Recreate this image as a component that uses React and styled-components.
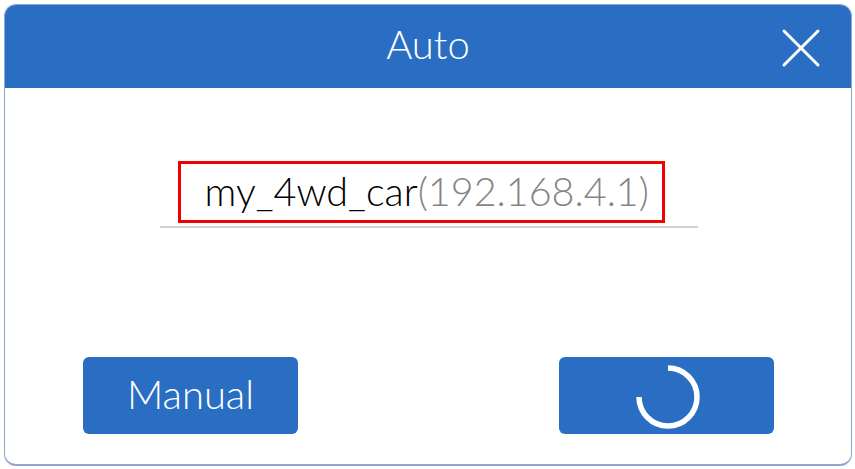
import React from "react";
import styled, { createGlobalStyle } from "styled-components";

const Global = createGlobalStyle`
  html, body { margin: 0; padding: 0; background: #ffffff; }
  body { font-family: Lato, "Noto Sans", sans-serif; }
`;

const Page = styled.div`
  padding: 4px 3px 3px 4px;
  box-sizing: border-box;
  width: 855px;
  height: 469px;
`;

const Dialog = styled.div`
  width: 848px;
  height: 462px;
  box-sizing: border-box;
  border: 1px solid #8ea8cd;
  border-bottom-width: 2px;
  border-radius: 12px;
  overflow: hidden;
  display: flex;
  flex-direction: column;
  background: #ffffff;
`;

const Header = styled.div`
  height: 83px;
  flex: none;
  background: #2a6ec3;
  position: relative;
  display: flex;
  align-items: center;
  justify-content: center;
  color: #ffffff;
  font-size: 40px;
  font-weight: 300;
`;

const Title = styled.span`
  margin-top: -6px;
`;

const Close = styled.button`
  position: absolute;
  right: 30px;
  top: 23px;
  width: 40px;
  height: 40px;
  padding: 0;
  border: 0;
  background: transparent;
  display: flex;
  align-items: center;
  justify-content: center;
`;

const Body = styled.div`
  flex: 1;
  display: flex;
  flex-direction: column;
  align-items: center;
  padding-top: 73px;
`;

const Field = styled.div`
  width: 538px;
  border-bottom: 2px solid #d3d3d3;
  display: flex;
  justify-content: center;
  padding-bottom: 3px;
  margin-left: 1px;
`;

const Highlight = styled.div`
  border: 3px solid #f00000;
  width: 487px;
  height: 62px;
  box-sizing: border-box;
  display: flex;
  align-items: center;
  padding-left: 24px;
  padding-bottom: 4px;
  font-size: 39.5px;
  font-weight: 300;
  white-space: nowrap;
  margin-right: 15px;
`;

const Name = styled.span`
  color: #000000;
`;

const Addr = styled.span`
  color: #858585;
`;

const Actions = styled.div`
  margin-top: auto;
  margin-bottom: 30px;
  width: 100%;
  display: flex;
  justify-content: space-between;
  padding: 0 77px 0 78px;
  box-sizing: border-box;
`;

const Button = styled.button`
  width: 215px;
  height: 77px;
  border: 0;
  border-radius: 6px;
  background: #2a6ec3;
  color: #ffffff;
  font-family: Lato, "Noto Sans", sans-serif;
  font-size: 40px;
  font-weight: 300;
  display: flex;
  align-items: center;
  justify-content: center;
  padding: 0 0 4px;
`;

export default function App() {
  return (
    <>
      <Global />
      <Page>
        <Dialog>
          <Header>
            <Title>Auto</Title>
            <Close aria-label="close">
              <svg width="40" height="40" viewBox="0 0 40 40">
                <path d="M3 3 L37 37 M37 3 L3 37" stroke="#fff" strokeWidth="3" strokeLinecap="round" fill="none" />
              </svg>
            </Close>
          </Header>
          <Body>
            <Field>
              <Highlight>
                <Name>my_4wd_car</Name>
                <Addr>(192.168.4.1)</Addr>
              </Highlight>
            </Field>
            <Actions>
              <Button>Manual</Button>
              <Button aria-label="loading">
                <svg width="70" height="70" viewBox="0 0 70 70" style={{ marginLeft: 2, marginTop: 6 }}>
                  <path d="M35 6 A29 29 0 1 1 6 35" stroke="#fff" strokeWidth="5.5" fill="none" />
                </svg>
              </Button>
            </Actions>
          </Body>
        </Dialog>
      </Page>
    </>
  );
}
